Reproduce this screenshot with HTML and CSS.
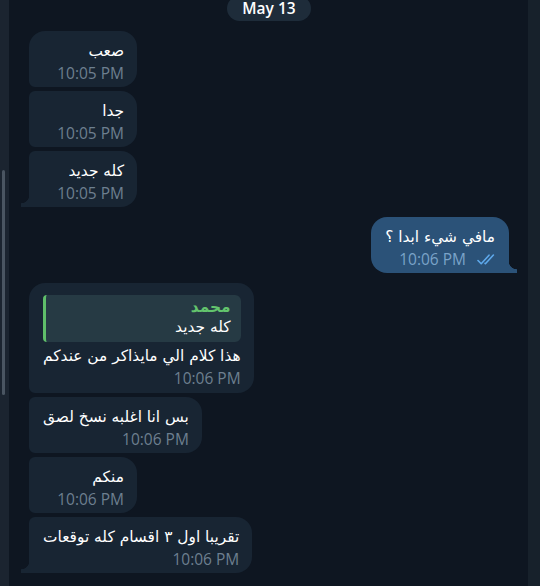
FILE: index.html
```html
<!DOCTYPE html>
<html lang="ar">
<head>
<meta charset="utf-8">
<link rel="stylesheet" href="styles.css">
</head>
<body>
<div class="app">
  <div class="side-strip"><div class="thumb"></div></div>
  <div class="chat">
    <div class="date-row"><span class="date-pill">May 13</span></div>

    <div class="group in">
      <div class="bubble"><div class="text" dir="rtl">صعب</div><div class="time">10:05 PM</div></div>
      <div class="bubble"><div class="text" dir="rtl">جدا</div><div class="time">10:05 PM</div></div>
      <div class="bubble last"><div class="text" dir="rtl">كله جديد</div><div class="time">10:05 PM</div></div>
    </div>

    <div class="group out">
      <div class="bubble last"><div class="text" dir="rtl">مافي شيء ابدا ؟</div><div class="time">10:06 PM
        <svg class="check" width="20" height="12" viewBox="0 0 20 12"><path d="M1 7.5l3.2 3.2L12 2.2M8 10.3l.4.4L16.4 2" fill="none" stroke="#5ea9ec" stroke-width="1.6" stroke-linecap="round" stroke-linejoin="round"/></svg></div></div>
    </div>

    <div class="group in">
      <div class="bubble with-quote">
        <div class="quote"><div class="q-name" dir="rtl">محمد</div><div class="q-text" dir="rtl">كله جديد</div></div>
        <div class="text" dir="rtl">هذا كلام الي مايذاكر من عندكم</div><div class="time">10:06 PM</div></div>
      <div class="bubble"><div class="text" dir="rtl">بس انا اغلبه نسخ لصق</div><div class="time">10:06 PM</div></div>
      <div class="bubble"><div class="text" dir="rtl">منكم</div><div class="time">10:06 PM</div></div>
      <div class="bubble last"><div class="text" dir="rtl">تقريبا اول ٣ اقسام كله توقعات</div><div class="time">10:06 PM</div></div>
    </div>
  </div>
  <div class="right-strip"></div>
</div>
</body>
</html>
```

FILE: styles.css
```css
html, body {
  margin: 0;
  padding: 0;
  background: #0e1621;
}
body {
  width: 540px;
  height: 586px;
  overflow: hidden;
  font-family: "Open Sans", "DejaVu Sans", sans-serif;
}
.app {
  display: flex;
  height: 586px;
}
.side-strip {
  width: 9px;
  background: #1b2430;
  position: relative;
  flex: none;
}
.thumb {
  position: absolute;
  left: 2px;
  width: 3px;
  top: 170px;
  height: 225px;
  background: #4a5562;
  border-radius: 2px;
}
.right-strip {
  width: 12px;
  flex: none;
  background: #17212b;
}
.chat {
  flex: 1;
  display: flex;
  flex-direction: column;
  padding: 0 19px 0 20px;
  margin-top: -4px;
}
.date-row {
  display: flex;
  justify-content: center;
  margin-bottom: 10px;
}
.date-pill {
  background: #1e2c3a;
  color: #ffffff;
  font-weight: 600;
  font-size: 15.5px;
  line-height: 25px;
  padding: 0 15px;
  border-radius: 13px;
  width: 54px;
  text-align: center;
}
.group {
  display: flex;
  flex-direction: column;
  gap: 4px;
  margin-bottom: 10px;
}
.group.in { align-items: flex-start; }
.group.out { align-items: flex-end; }
.bubble {
  position: relative;
  background: #182533;
  padding: 10px 13px 3px 14px;
  min-width: 81px;
  display: flex;
  flex-direction: column;
  align-items: flex-end;
}
.in .bubble { border-radius: 6px 16px 16px 6px; }
.in .bubble:first-child { border-radius: 16px 16px 16px 6px; }
.in .bubble.last { border-bottom-left-radius: 0; }
.in .bubble.last::after {
  content: "";
  position: absolute;
  left: -8px;
  bottom: 0;
  width: 8px;
  height: 12px;
  background: radial-gradient(circle at 0 0, transparent 8px, #182533 8.6px);
}
.out .bubble {
  background: #2b5278;
  border-radius: 16px 16px 0 16px;
  padding-left: 14px;
  padding-right: 14px;
}
.out .bubble.last::after {
  content: "";
  position: absolute;
  right: -8px;
  bottom: 0;
  width: 8px;
  height: 12px;
  background: radial-gradient(circle at 100% 0, transparent 8px, #2b5278 8.6px);
}
.text {
  color: #ffffff;
  font-size: 15.4px;
  line-height: 21px;
  white-space: nowrap;
  font-family: "DejaVu Sans", sans-serif;
}
.time {
  color: #6d7f8f;
  font-size: 15.5px;
  line-height: 22px;
  display: flex;
  align-items: center;
  white-space: nowrap;
}
.out .time { color: #7aa3c8; }
.check {
  margin-left: 11px;
  margin-right: -2px;
}
.bubble.with-quote { padding-top: 8px; padding-bottom: 4px; }
.quote {
  align-self: stretch;
  background: #263a44;
  border-left: 3px solid #5fbe6a;
  border-radius: 4px 6px 6px 4px;
  padding: 2px 10px 4px 10px;
  margin: 4px 0 4px;
  display: flex;
  flex-direction: column;
  align-items: flex-end;
}
.q-name {
  color: #63c46d;
  font-weight: bold;
  font-size: 15.4px;
  line-height: 20px;
  font-family: "DejaVu Sans", sans-serif;
}
.q-text {
  color: #ffffff;
  font-size: 15.4px;
  line-height: 21px;
  font-family: "DejaVu Sans", sans-serif;
}
```
